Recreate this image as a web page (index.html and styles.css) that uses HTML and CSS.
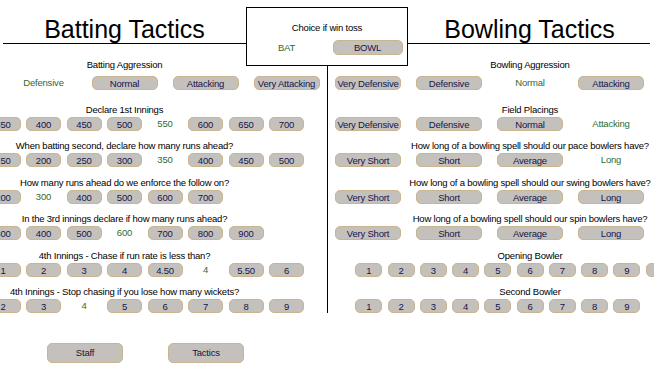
FILE: index.html
```html
<!DOCTYPE html>
<html lang="en">
<head>
<meta charset="utf-8">
<title>Tactics</title>
<link rel="stylesheet" href="styles.css">
</head>
<body>
<div class="panels">
  <section class="panel left">
    <h1 class="title">Batting Tactics</h1>
    <div class="body">
      <div class="group first">
        <div class="label">Batting Aggression</div>
        <div class="row c5">
          <span class="cell"><button class="btn">Very Defensive</button></span>
          <span class="cell sel">Defensive</span>
          <span class="cell"><button class="btn">Normal</button></span>
          <span class="cell"><button class="btn">Attacking</button></span>
          <span class="cell"><button class="btn">Very Attacking</button></span>
        </div>
      </div>
      <div class="group">
        <div class="label">Declare 1st Innings</div>
        <div class="row c9">
          <span class="cell"><button class="btn">300</button></span>
          <span class="cell"><button class="btn">350</button></span>
          <span class="cell"><button class="btn">400</button></span>
          <span class="cell"><button class="btn">450</button></span>
          <span class="cell"><button class="btn">500</button></span>
          <span class="cell sel">550</span>
          <span class="cell"><button class="btn">600</button></span>
          <span class="cell"><button class="btn">650</button></span>
          <span class="cell"><button class="btn">700</button></span>
        </div>
      </div>
      <div class="group">
        <div class="label">When batting second, declare how many runs ahead?</div>
        <div class="row c9">
          <span class="cell"><button class="btn">100</button></span>
          <span class="cell"><button class="btn">150</button></span>
          <span class="cell"><button class="btn">200</button></span>
          <span class="cell"><button class="btn">250</button></span>
          <span class="cell"><button class="btn">300</button></span>
          <span class="cell sel">350</span>
          <span class="cell"><button class="btn">400</button></span>
          <span class="cell"><button class="btn">450</button></span>
          <span class="cell"><button class="btn">500</button></span>
        </div>
      </div>
      <div class="group">
        <div class="label">How many runs ahead do we enforce the follow on?</div>
        <div class="row c9">
          <span class="cell"><button class="btn">100</button></span>
          <span class="cell"><button class="btn">200</button></span>
          <span class="cell sel">300</span>
          <span class="cell"><button class="btn">400</button></span>
          <span class="cell"><button class="btn">500</button></span>
          <span class="cell"><button class="btn">600</button></span>
          <span class="cell"><button class="btn">700</button></span>
          <span class="cell"></span>
          <span class="cell"></span>
        </div>
      </div>
      <div class="group">
        <div class="label">In the 3rd innings declare if how many runs ahead?</div>
        <div class="row c9">
          <span class="cell"><button class="btn">200</button></span>
          <span class="cell"><button class="btn">300</button></span>
          <span class="cell"><button class="btn">400</button></span>
          <span class="cell"><button class="btn">500</button></span>
          <span class="cell sel">600</span>
          <span class="cell"><button class="btn">700</button></span>
          <span class="cell"><button class="btn">800</button></span>
          <span class="cell"><button class="btn">900</button></span>
          <span class="cell"></span>
        </div>
      </div>
      <div class="group">
        <div class="label">4th Innings - Chase if run rate is less than?</div>
        <div class="row c9">
          <span class="cell"><button class="btn">0</button></span>
          <span class="cell"><button class="btn">1</button></span>
          <span class="cell"><button class="btn">2</button></span>
          <span class="cell"><button class="btn">3</button></span>
          <span class="cell"><button class="btn">4</button></span>
          <span class="cell"><button class="btn">4.50</button></span>
          <span class="cell sel">4</span>
          <span class="cell"><button class="btn">5.50</button></span>
          <span class="cell"><button class="btn">6</button></span>
        </div>
      </div>
      <div class="group">
        <div class="label">4th Innings - Stop chasing if you lose how many wickets?</div>
        <div class="row c9">
          <span class="cell"><button class="btn">1</button></span>
          <span class="cell"><button class="btn">2</button></span>
          <span class="cell"><button class="btn">3</button></span>
          <span class="cell sel">4</span>
          <span class="cell"><button class="btn">5</button></span>
          <span class="cell"><button class="btn">6</button></span>
          <span class="cell"><button class="btn">7</button></span>
          <span class="cell"><button class="btn">8</button></span>
          <span class="cell"><button class="btn">9</button></span>
        </div>
      </div>
    </div>
  </section>

  <section class="panel right">
    <h1 class="title">Bowling Tactics</h1>
    <div class="body">
      <div class="group first">
        <div class="label">Bowling Aggression</div>
        <div class="row c5">
          <span class="cell"><button class="btn">Very Defensive</button></span>
          <span class="cell"><button class="btn">Defensive</button></span>
          <span class="cell sel">Normal</span>
          <span class="cell"><button class="btn">Attacking</button></span>
          <span class="cell"><button class="btn">Very Attacking</button></span>
        </div>
      </div>
      <div class="group">
        <div class="label">Field Placings</div>
        <div class="row c5">
          <span class="cell"><button class="btn">Very Defensive</button></span>
          <span class="cell"><button class="btn">Defensive</button></span>
          <span class="cell"><button class="btn">Normal</button></span>
          <span class="cell sel">Attacking</span>
          <span class="cell"><button class="btn">Very Attacking</button></span>
        </div>
      </div>
      <div class="group">
        <div class="label">How long of a bowling spell should our pace bowlers have?</div>
        <div class="row c5">
          <span class="cell"><button class="btn">Very Short</button></span>
          <span class="cell"><button class="btn">Short</button></span>
          <span class="cell"><button class="btn">Average</button></span>
          <span class="cell sel">Long</span>
          <span class="cell"><button class="btn">Very Long</button></span>
        </div>
      </div>
      <div class="group">
        <div class="label">How long of a bowling spell should our swing bowlers have?</div>
        <div class="row c5">
          <span class="cell"><button class="btn">Very Short</button></span>
          <span class="cell"><button class="btn">Short</button></span>
          <span class="cell"><button class="btn">Average</button></span>
          <span class="cell"><button class="btn">Long</button></span>
          <span class="cell sel">Very Long</span>
        </div>
      </div>
      <div class="group">
        <div class="label">How long of a bowling spell should our spin bowlers have?</div>
        <div class="row c5">
          <span class="cell"><button class="btn">Very Short</button></span>
          <span class="cell"><button class="btn">Short</button></span>
          <span class="cell"><button class="btn">Average</button></span>
          <span class="cell"><button class="btn">Long</button></span>
          <span class="cell sel">Very Long</span>
        </div>
      </div>
      <div class="group">
        <div class="label">Opening Bowler</div>
        <div class="row c11">
          <span class="cell"><button class="btn">1</button></span>
          <span class="cell"><button class="btn">2</button></span>
          <span class="cell"><button class="btn">3</button></span>
          <span class="cell"><button class="btn">4</button></span>
          <span class="cell"><button class="btn">5</button></span>
          <span class="cell"><button class="btn">6</button></span>
          <span class="cell"><button class="btn">7</button></span>
          <span class="cell"><button class="btn">8</button></span>
          <span class="cell"><button class="btn">9</button></span>
          <span class="cell"><button class="btn">10</button></span>
          <span class="cell sel">11</span>
        </div>
      </div>
      <div class="group">
        <div class="label">Second Bowler</div>
        <div class="row c11">
          <span class="cell"><button class="btn">1</button></span>
          <span class="cell"><button class="btn">2</button></span>
          <span class="cell"><button class="btn">3</button></span>
          <span class="cell"><button class="btn">4</button></span>
          <span class="cell"><button class="btn">5</button></span>
          <span class="cell"><button class="btn">6</button></span>
          <span class="cell"><button class="btn">7</button></span>
          <span class="cell"><button class="btn">8</button></span>
          <span class="cell"><button class="btn">9</button></span>
          <span class="cell sel">10</span>
          <span class="cell"><button class="btn">11</button></span>
        </div>
      </div>
    </div>
  </section>
</div>

<div class="toss">
  <div class="toss-label">Choice if win toss</div>
  <div class="row c2">
    <span class="cell sel">BAT</span>
    <span class="cell"><button class="btn">BOWL</button></span>
  </div>
</div>

<div class="footer">
  <button class="btn big">Staff</button>
  <button class="btn big">Tactics</button>
</div>
</body>
</html>
```

FILE: styles.css
```css
* { box-sizing: border-box; }

html, body { margin: 0; padding: 0; }

body {
  width: 654px;
  height: 366px;
  overflow: hidden;
  position: relative;
  background: #ffffff;
  color: #000000;
  font-family: "Liberation Sans", Arial, sans-serif;
  font-size: 9.5px;
  letter-spacing: -0.2px;
}

.panels {
  display: grid;
  grid-template-columns: 405px 405px;
  width: 810px;
  margin-left: -78px;
}

.title {
  margin: 0;
  padding-top: 15px;
  font-size: 25px;
  font-weight: normal;
  letter-spacing: 0;
  line-height: 28px;
  text-align: center;
  border-bottom: 1px solid #000;
}

.left .title { margin-left: 81px; padding-right: 81px; }
.right .title { margin-right: 82px; padding-left: 82px; }

.body { padding-top: 14px; padding-bottom: 0; }
.right .body { border-left: 1px solid #000; }

.group { margin-bottom: 8.4px; }
.group.first { margin-bottom: 13px; }
.group.first .row { margin-top: 4px; }
.group:last-child { margin-bottom: 2px; }

.label {
  height: 14px;
  line-height: 14px;
  text-align: center;
  white-space: nowrap;
}

.row {
  display: grid;
  justify-content: center;
  height: 14px;
}
.c2 { grid-template-columns: repeat(2, 81px); height: 15px; }
.c5 { grid-template-columns: repeat(5, 81px); }
.c9 { grid-template-columns: repeat(9, 40.5px); }
.c11 { grid-template-columns: repeat(11, 32.25px); }

.cell {
  display: flex;
  justify-content: center;
  align-items: center;
  white-space: nowrap;
  line-height: 14px;
}

.sel { color: #2f6b2f; }

.btn {
  display: inline-block;
  margin: 0;
  padding: 0;
  height: 14px;
  line-height: 12px;
  border: 1px solid #c9b590;
  border-radius: 5px;
  background: #c4c1bd;
  color: #14144a;
  font: inherit;
  letter-spacing: inherit;
  text-align: center;
  white-space: nowrap;
}

.c5 .btn { width: 66px; }
.c9 .btn { width: 35px; }
.c11 .btn { width: 27px; }
.c2 .btn { width: 70px; height: 15px; line-height: 13px; }

.toss {
  position: absolute;
  left: 246px;
  top: 7px;
  width: 162px;
  height: 59px;
  border: 1px solid #000;
  background: #fff;
  padding-top: 13px;
}

.toss-label {
  height: 14px;
  line-height: 14px;
  text-align: center;
  margin-bottom: 5px;
}

.footer {
  display: flex;
  gap: 45px;
  padding-left: 47px;
  margin-top: 28px;
}

.btn.big {
  width: 76px;
  height: 20px;
  line-height: 18px;
}
```
